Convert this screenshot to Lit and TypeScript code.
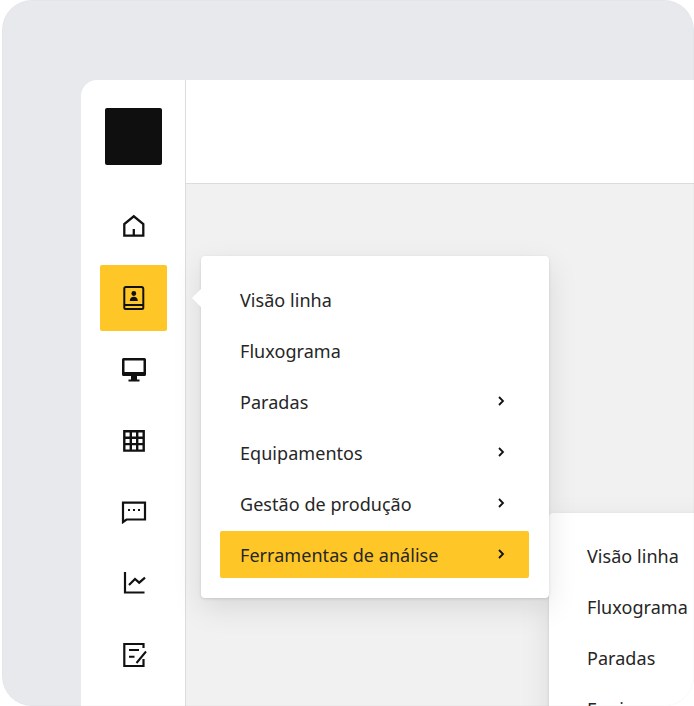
import { LitElement, html, css, svg } from 'lit';
import { customElement } from 'lit/decorators.js';

interface MenuRow {
  label: string;
  more?: boolean;
  active?: boolean;
}

const MAIN_ROWS: MenuRow[] = [
  { label: 'Visão linha' },
  { label: 'Fluxograma' },
  { label: 'Paradas', more: true },
  { label: 'Equipamentos', more: true },
  { label: 'Gestão de produção', more: true },
  { label: 'Ferramentas de análise', more: true, active: true },
];

const SUB_ROWS: MenuRow[] = [
  { label: 'Visão linha' },
  { label: 'Fluxograma' },
  { label: 'Paradas' },
  { label: 'Equipamentos' },
];

// nav icons, all on a 24 box
const ICONS = [
  svg`<path d="M2.300 20.700V9L11.800 1.300 21.300 9V20.700Z M11.800 14V20.700" fill="none" stroke="#111" stroke-width="2.300"/>`,
  svg`<path d="M3.800 23a1.500 1.500 0 0 1-1.500-1.500v-19A1.500 1.500 0 0 1 3.800 1h15.500a2 2 0 0 1 2 2v18.500a1.500 1.500 0 0 1-1.500 1.500z M2.300 19h19" fill="none" stroke="#111" stroke-width="2"/><circle cx="11.800" cy="7.500" r="2.400" fill="#111"/><path d="M7.800 15c0-3 1.800-4.200 4-4.200s4 1.200 4 4.200z" fill="#111"/>`,
  svg`<path fill-rule="evenodd" d="M1.500 0h21A1.500 1.500 0 0 1 24 1.500V16.500a1.500 1.500 0 0 1-1.500 1.500H15v3.500h2.500v2H6.500v-2H9V18H1.500A1.500 1.500 0 0 1 0 16.500V1.500A1.500 1.500 0 0 1 1.500 0zM2.500 2.500V14h19V2.500z" fill="#111"/>`,
  svg`<path d="M2.300 2.200h19.400v19.400H2.300z M2.300 8.700h19.400 M2.300 15.100h19.400 M8.800 2.200v19.400 M15.200 2.200v19.400" fill="none" stroke="#111" stroke-width="2.400"/>`,
  svg`<path d="M1 21V1.700H23V18.500H4.500z" fill="none" stroke="#111" stroke-width="2.200"/><path d="M6 8h2v2H6z M11 8h2v2h-2z M16 8h2v2h-2z" fill="#111"/>`,
  svg`<path d="M3 0V20.500H22.500" fill="none" stroke="#111" stroke-width="2.200"/><path d="M7 13l6-6 4.200 3.700 5.800-5" fill="none" stroke="#111" stroke-width="2.200"/>`,
  svg`<path d="M21.500 5V1H2.300V23H21.500V16" fill="none" stroke="#111" stroke-width="2.200"/><path d="M7 7h10 M7 13.700h5.500 M14.500 20L24 8.500" fill="none" stroke="#111" stroke-width="2"/>`,
];

@customElement('app-root')
export class AppRoot extends LitElement {
  static styles = css`
    :host {
      display: block;
      width: 694px;
      height: 706px;
      background: #fff;
      font-family: 'Noto Sans', sans-serif;
      color: #262626;
    }
    .frame {
      position: relative;
      box-sizing: border-box;
      margin-left: 2px;
      width: 692px;
      height: 706px;
      padding: 80px 0 0 79px;
      background: #e8e9ed;
      border-radius: 30px;
      overflow: hidden;
    }
    .frame::after {
      content: '';
      position: absolute;
      inset: 0;
      border: 1px solid rgba(0, 0, 0, 0.015);
      border-radius: 30px;
      pointer-events: none;
    }
    .app {
      display: flex;
      height: 100%;
      background: #fff;
      border-top-left-radius: 16px;
    }
    .sidebar {
      box-sizing: border-box;
      flex: 0 0 105px;
      padding: 28px 0 0 19px;
      border-right: 1px solid #dcdcdc;
    }
    .logo {
      width: 57px;
      height: 57px;
      margin: 0 0 29px 5px;
      background: #0f0f0f;
      border-radius: 2px;
    }
    .nav {
      display: flex;
      flex-direction: column;
      gap: 5.4px;
    }
    .nav-item {
      display: flex;
      align-items: center;
      justify-content: center;
      flex: none;
      width: 67px;
      height: 66px;
      border-radius: 2px;
    }
    .nav-item.active {
      background: #ffc627;
    }
    .nav-item svg {
      width: 24px;
      height: 24px;
      margin-left: 1px;
      overflow: visible;
    }
    .main {
      flex: 1;
      display: flex;
      flex-direction: column;
    }
    .topbar {
      flex: 0 0 103px;
      background: #fff;
      border-bottom: 1px solid #dcdcdc;
    }
    .content {
      flex: 1;
      background: #f1f1f1;
    }
    .menu {
      position: absolute;
      box-sizing: border-box;
      background: #fff;
      border-radius: 4px;
      box-shadow: 0 1px 3px rgba(0, 0, 0, 0.12), 0 10px 30px rgba(0, 0, 0, 0.1);
    }
    .menu.main-menu {
      left: 199px;
      top: 256px;
      width: 348px;
      height: 342px;
      padding: 20px 19px 0;
    }
    .menu.sub-menu {
      left: 547px;
      top: 513px;
      width: 260px;
      height: 300px;
      padding: 19px 19px 0;
    }
    .menu.main-menu::before {
      content: '';
      position: absolute;
      left: -9px;
      top: 33px;
      border-style: solid;
      border-width: 9px 9px 9px 0;
      border-color: transparent #fff transparent transparent;
    }
    .row {
      display: flex;
      align-items: center;
      justify-content: space-between;
      box-sizing: border-box;
      height: 47px;
      margin-bottom: 4px;
      padding: 0 24px 0 19px;
      font-size: 18px;
      letter-spacing: 0.05px;
      white-space: nowrap;
      border-radius: 2px;
    }
    .main-menu .row {
      margin-right: 1px;
      padding: 0 23px 0 20px;
    }
    .row.active {
      background: #ffc627;
    }
    .row svg {
      width: 10px;
      height: 12px;
      margin-bottom: 2px;
    }
  `;

  private renderRow(row: MenuRow) {
    return html`<div class="row ${row.active ? 'active' : ''}">
      <span>${row.label}</span>
      ${row.more
        ? html`<svg viewBox="0 0 10 12"><path d="M3 2l4 4-4 4" fill="none" stroke="#111" stroke-width="1.800"/></svg>`
        : ''}
    </div>`;
  }

  render() {
    return html`
      <div class="frame">
        <div class="app">
          <aside class="sidebar">
            <div class="logo"></div>
            <nav class="nav">
              ${ICONS.map(
                (icon, i) => html`<div class="nav-item ${i === 1 ? 'active' : ''}">
                  <svg viewBox="0 0 24 24">${icon}</svg>
                </div>`,
              )}
            </nav>
          </aside>
          <div class="main">
            <div class="topbar"></div>
            <div class="content"></div>
          </div>
        </div>
        <div class="menu sub-menu">${SUB_ROWS.map((r) => this.renderRow(r))}</div>
        <div class="menu main-menu">${MAIN_ROWS.map((r) => this.renderRow(r))}</div>
      </div>
    `;
  }
}
